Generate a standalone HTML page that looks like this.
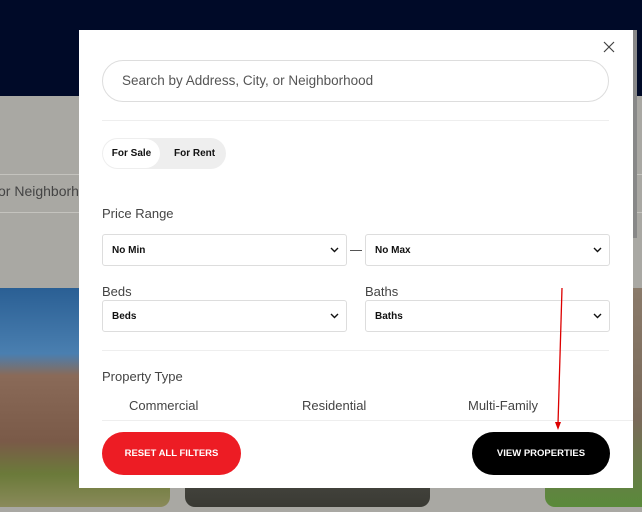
<!DOCTYPE html>
<html><head><meta charset="utf-8"><style>
*{box-sizing:border-box;margin:0;padding:0}
body{width:642px;height:512px;overflow:hidden;position:relative;background:#a9a8a3;font-family:"Liberation Sans",sans-serif}
.nav{position:absolute;left:0;top:0;width:642px;height:96px;background:#000a28}
.bgline{position:absolute;left:0;width:642px;height:1px;background:#c4c3be}
.bgtext{position:absolute;left:-2px;top:183px;font-size:14px;color:#444}
.img{position:absolute;border-radius:10px;overflow:hidden}
.modal{position:absolute;left:79px;top:30px;width:554px;height:458px;background:#fff}
.sb{position:absolute;left:633px;top:30px;width:4px;height:208px;background:#888}
.abs{position:absolute}
.search{left:23px;top:30px;width:507px;height:42px;border:1px solid #ddd;border-radius:21px;font-size:13.5px;color:#555;padding:12px 0 0 19px}
.hr{height:1px;background:#eee;left:23px;width:507px}
.tog{left:23px;top:108px;width:124px;height:31px;background:#eee;border-radius:16px}
.tog .on{position:absolute;left:1px;top:1px;width:57px;height:29px;background:#fff;border-radius:15px;font-size:10px;font-weight:bold;text-align:center;line-height:29px;color:#111}
.tog .off{position:absolute;left:72px;top:0;font-size:10px;font-weight:bold;line-height:31px;color:#111}
.lbl{font-size:13px;color:#444}
.sel{height:32px;border:1px solid #ddd;border-radius:3px;font-size:10px;font-weight:bold;color:#111;padding:10px 0 0 9px}
.sel svg{position:absolute;right:7px;top:12px}
.pt{font-size:13px;color:#444;top:397px}
.btn{height:43px;border-radius:22px;color:#fff;font-size:9.5px;font-weight:bold;text-align:center;line-height:43px}
</style></head><body>
<div class="nav"></div>
<div class="bgline" style="top:174px"></div>
<div class="bgline" style="top:212px"></div>
<div class="bgtext">or Neighborh</div>
<div class="img" style="left:-10px;top:288px;width:180px;height:219px;background:linear-gradient(#2a5f94 0,#4a7fb0 30%,#8a6a58 40%,#7a5a48 70%,#6b7a3a 85%,#8a8a5a 100%)"></div>
<div class="img" style="left:185px;top:380px;width:245px;height:127px;background:linear-gradient(#6a6a60,#3a3a34)"></div>
<div class="img" style="left:545px;top:288px;width:110px;height:219px;background:linear-gradient(#8a7a6a,#7a6a5a 60%,#5a8a3a)"></div>
<div class="sb"></div>
<div class="modal">
<svg class="abs" style="left:524px;top:11px" width="12" height="12" viewBox="0 0 12 12"><path d="M1 1L11 11M11 1L1 11" stroke="#444" stroke-width="1.2"/></svg>
<div class="abs search">Search by Address, City, or Neighborhood</div>
<div class="abs hr" style="top:90px"></div>
<div class="abs tog"><div class="on">For Sale</div><div class="off">For Rent</div></div>
<div class="abs lbl" style="left:23px;top:176px">Price Range</div>
<div class="abs sel" style="left:23px;top:204px;width:245px">No Min<svg width="9" height="6" viewBox="0 0 9 6"><path d="M1 1L4.5 4.5L8 1" stroke="#111" stroke-width="1.4" fill="none"/></svg></div>
<div class="abs" style="left:271px;top:220px;width:12px;height:1px;background:#555"></div>
<div class="abs sel" style="left:286px;top:204px;width:245px">No Max<svg width="9" height="6" viewBox="0 0 9 6"><path d="M1 1L4.5 4.5L8 1" stroke="#111" stroke-width="1.4" fill="none"/></svg></div>
<div class="abs lbl" style="left:23px;top:254px">Beds</div>
<div class="abs lbl" style="left:286px;top:254px">Baths</div>
<div class="abs sel" style="left:23px;top:270px;width:245px">Beds<svg width="9" height="6" viewBox="0 0 9 6"><path d="M1 1L4.5 4.5L8 1" stroke="#111" stroke-width="1.4" fill="none"/></svg></div>
<div class="abs sel" style="left:286px;top:270px;width:245px">Baths<svg width="9" height="6" viewBox="0 0 9 6"><path d="M1 1L4.5 4.5L8 1" stroke="#111" stroke-width="1.4" fill="none"/></svg></div>
<div class="abs hr" style="top:320px"></div>
<div class="abs lbl" style="left:23px;top:339px">Property Type</div>
<div class="abs pt" style="left:50px;top:368px">Commercial</div>
<div class="abs pt" style="left:223px;top:368px">Residential</div>
<div class="abs pt" style="left:389px;top:368px">Multi-Family</div>
<div class="abs hr" style="top:390px;width:531px"></div>
<div class="abs btn" style="left:23px;top:402px;width:139px;background:#ed1c24">RESET ALL FILTERS</div>
<div class="abs btn" style="left:393px;top:402px;width:138px;background:#000">VIEW PROPERTIES</div>
</div>
<svg class="abs" style="left:0;top:0" width="642" height="512"><path d="M562 288L558 424" stroke="#d00" stroke-width="1.3"/><path d="M555 422L558 430L561 422Z" fill="#d00"/></svg>
</body></html>
